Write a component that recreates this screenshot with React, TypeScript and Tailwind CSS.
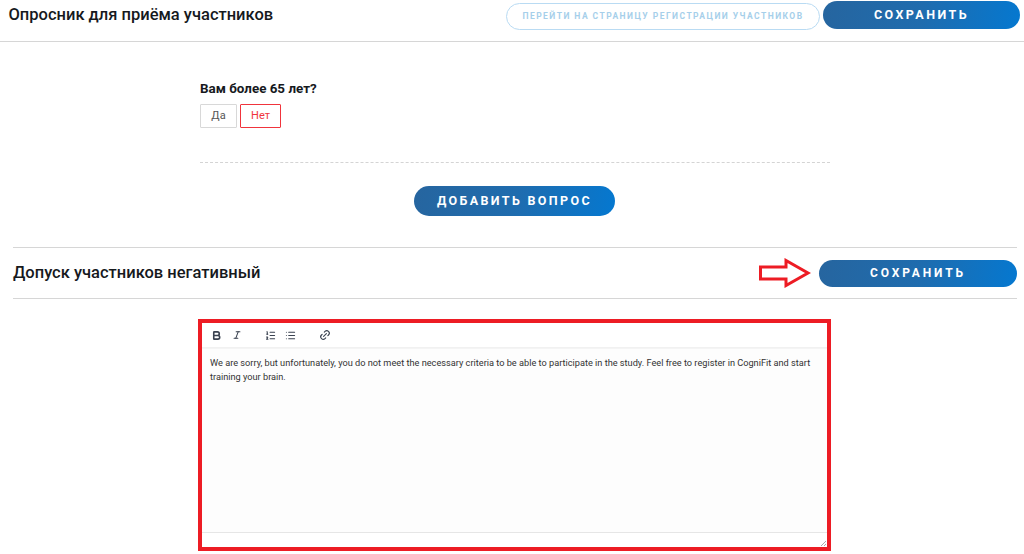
import { Bold, Italic, Link2, List, ListOrdered } from "lucide-react";

const gradient = "bg-[linear-gradient(100deg,#26659f_0%,#1f6cae_50%,#0578d0_100%)]";

function SaveButton({ className, children }: { className: string; children: React.ReactNode }) {
  return (
    <button className={`${gradient} ${className} rounded-full flex items-center justify-center text-white font-bold uppercase`}>
      {children}
    </button>
  );
}

function Arrow() {
  return (
    <svg width="52" height="30" viewBox="0 0 52 30" className="mr-[8px] shrink-0">
      <path d="M1.5 9H27V2.5L49 15L27 27.5V21H1.5Z" fill="#fff" stroke="#ed1c24" strokeWidth="3" />
    </svg>
  );
}

function Toolbar() {
  return (
    <div className="h-[25px] flex items-center border-b border-[#f1f1f1] bg-white text-[#3a4250]">
      <Bold size={11} strokeWidth={3.5} className="ml-[9px]" />
      <Italic size={10} strokeWidth={2.5} className="ml-[10px]" />
      <ListOrdered size={11} strokeWidth={2.2} className="ml-[23px]" />
      <List size={11} strokeWidth={2.2} className="ml-[9px]" />
      <Link2 size={12} strokeWidth={2.2} className="ml-[23px] -rotate-45" />
    </div>
  );
}

export default function App() {
  return (
    <div className="w-[1024px] h-[554px] overflow-hidden bg-white font-['Roboto',sans-serif] text-[#16191d]">
      <header className="h-[42px] border-b border-[#d6d6d6] flex items-start pl-[9px] pr-[4px]">
        <h1 className="text-[16.5px] leading-[20px] mt-[5px] font-medium -ml-[0.5px]">Опросник для приёма участников</h1>
        <button className="ml-auto mt-[3px] w-[314px] h-[27px] rounded-full border-[1.5px] border-[#b9dbf3] text-[8.5px] font-bold tracking-[1.45px] text-[#a6cfea] uppercase">
          Перейти на страницу регистрации участников
        </button>
        <SaveButton className="ml-[3px] mt-[1px] w-[197px] h-[28px] text-[12.5px] tracking-[2.45px]">Сохранить</SaveButton>
      </header>

      <section className="w-[630px] ml-[200px] pt-[38px] border-b border-dashed border-[#d4d4d4] h-[121px]">
        <p className="text-[13.4px] leading-[17px] font-bold">Вам более 65 лет?</p>
        <div className="flex gap-[3px] mt-[7px]">
          <button className="w-[37px] h-[24px] border border-[#d8d8d8] rounded-[1px] text-[11px] text-[#555]">Да</button>
          <button className="w-[41px] h-[24px] border border-[#f0343c] rounded-[1px] text-[11px] text-[#f0343c]">Нет</button>
        </div>
      </section>

      <div className="flex justify-center pt-[23px] pl-[5px]">
        <SaveButton className="w-[201px] h-[30px] text-[12.5px] tracking-[2.35px]">Добавить вопрос</SaveButton>
      </div>

      <div className="ml-[13px] w-[1004px] mt-[31px] h-[52px] border-y border-[#d6d6d6] flex items-center">
        <h2 className="text-[16.5px] font-medium mt-[1px]">Допуск участников негативный</h2>
        <div className="ml-auto flex items-center">
          <Arrow />
          <SaveButton className="w-[198px] h-[27px] text-[12px] tracking-[2.85px]">Сохранить</SaveButton>
        </div>
      </div>

      <div className="ml-[198px] mt-[20px] w-[633px] h-[232px] border-[4px] border-[#ed1c24] flex flex-col">
        <Toolbar />
        <div className="flex-1 bg-[#fdfdfd] px-[8px] pt-[7px] text-[9.2px] leading-[14px] text-[#333] border-t border-[#f4f4f4]">
          We are sorry, but unfortunately, you do not meet the necessary criteria to be able to participate in the study. Feel free to register in CogniFit and start training your brain.
        </div>
        <div className="h-[15px] border-t border-[#e6e6e6] flex justify-end items-end p-[1px] bg-white">
          <svg width="5" height="5" viewBox="0 0 5 5">
            <path d="M0 5L5 0M3 5L5 3" stroke="#aaa" strokeWidth="1" />
          </svg>
        </div>
      </div>
    </div>
  );
}
